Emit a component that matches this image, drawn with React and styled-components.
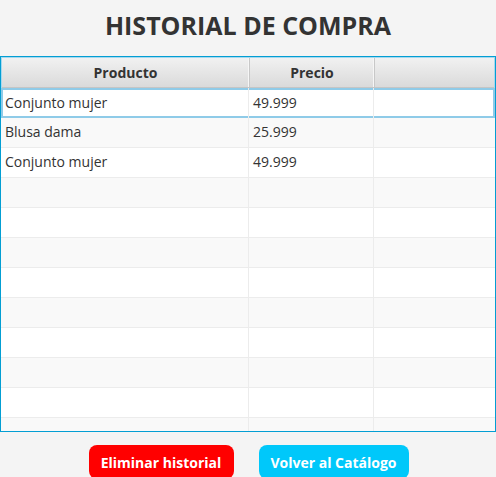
import React from "react";
import styled, { createGlobalStyle } from "styled-components";

const Global = createGlobalStyle`
  html, body { margin: 0; padding: 0; background: #f4f4f4; }
  body { font-family: "Open Sans", "Noto Sans", sans-serif; color: #333; }
`;

const Page = styled.div`
  width: 496px;
  height: 477px;
  display: flex;
  flex-direction: column;
  overflow: hidden;
  background: #f4f4f4;
`;

const Title = styled.h1`
  margin: 0;
  height: 56px;
  box-sizing: border-box;
  padding-bottom: 6px;
  flex-shrink: 0;
  display: flex;
  align-items: center;
  justify-content: center;
  font-size: 25px;
  font-weight: 700;
  color: #333;
`;

const Table = styled.div`
  height: 376px;
  flex-shrink: 0;
  box-sizing: border-box;
  border: 1px solid #039ed3;
  box-shadow: inset 0 0 0 1px #a6d9ef;
  background: #fff;
  overflow: hidden;
  display: flex;
  flex-direction: column;
`;

const cols = "248px 125px 1fr";

const Header = styled.div`
  display: grid;
  grid-template-columns: ${cols};
  height: 30px;
  flex-shrink: 0;
  margin: 1px 1px 0 1px;
  background: linear-gradient(#f1f1f1, #dadada);
  border-bottom: 1px solid #c5c5c5;
  box-sizing: border-box;
`;

const HeadCell = styled.div`
  display: flex;
  align-items: center;
  justify-content: center;
  font-size: 14px;
  font-weight: 700;
  color: #333;
  border-right: 1px solid #c8c8c8;
  box-shadow: inset -1px 0 0 #f6f6f6;
  &:last-child { border-right: none; box-shadow: none; }
`;

const Row = styled.div`
  display: grid;
  grid-template-columns: ${cols};
  height: 30px;
  flex-shrink: 0;
  box-sizing: border-box;
  background: ${(p) => (p.$odd ? "#f9f9f9" : "#ffffff")};
  border-bottom: 1px solid #ececec;
  ${(p) =>
    p.$focused &&
    `box-shadow: inset 0 0 0 2px #8fcbe8; border-bottom: none;`}
`;

const Cell = styled.div`
  display: flex;
  align-items: center;
  padding-left: 4px;
  padding-bottom: 2px;
  font-size: 14px;
  color: #333;
  border-right: 1px solid #ececec;
  &:last-child { border-right: none; }
`;

const Footer = styled.div`
  flex: 1;
  display: flex;
  justify-content: center;
  align-items: flex-start;
  gap: 25px;
  padding-top: 13px;
  padding-left: 1px;
`;

const Button = styled.button`
  border: none;
  border-radius: 8px;
  background: ${(p) => p.$bg};
  color: #fff;
  font-family: "Open Sans", "Noto Sans", sans-serif;
  font-weight: 700;
  font-size: 14px;
  height: 34px;
  padding: 0;
  white-space: nowrap;
  width: ${(p) => p.$w}px;
  cursor: pointer;
`;

const data = [
  ["Conjunto mujer", "49.999"],
  ["Blusa dama", "25.999"],
  ["Conjunto mujer", "49.999"],
];

export default function App() {
  const rows = [];
  for (let i = 0; i < 12; i++) rows.push(data[i] || ["", ""]);
  return (
    <Page>
      <Global />
      <Title>HISTORIAL DE COMPRA</Title>
      <Table>
        <Header>
          <HeadCell>Producto</HeadCell>
          <HeadCell>Precio</HeadCell>
          <HeadCell />
        </Header>
        {rows.map((r, i) => (
          <Row key={i} $odd={i % 2 === 1} $focused={i === 0}>
            <Cell>{r[0]}</Cell>
            <Cell>{r[1]}</Cell>
            <Cell />
          </Row>
        ))}
      </Table>
      <Footer>
        <Button $bg="#ff0000" $w={145}>Eliminar historial</Button>
        <Button $bg="#00c8fa" $w={150}>Volver al Catálogo</Button>
      </Footer>
    </Page>
  );
}
